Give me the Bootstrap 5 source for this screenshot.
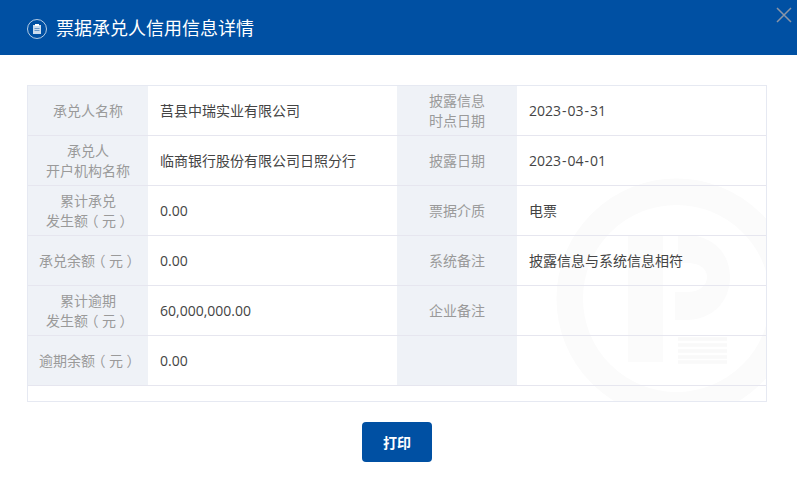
<!doctype html>
<html lang="zh"><head><meta charset="utf-8">
<link href="https://cdn.jsdelivr.net/npm/bootstrap@5.3.0/dist/css/bootstrap.min.css" rel="stylesheet">
<style>
html,body{height:100%}
body{font-family:"Open Sans","Noto Sans CJK SC",sans-serif;font-size:14px;color:#333;background:#fff;overflow:hidden}
.hd-bar{height:55px;background:#0050a3;color:#fff;padding-left:27px}
.hd-ico{margin-top:3px;flex:none}
.hd-title{font-size:18px;font-weight:400;line-height:53px;margin:0 0 0 9px;font-family:"Noto Sans CJK SC",sans-serif}
.hd-close{top:7px;right:5px;width:16px;height:16px}
.sheet-wrap{margin:30px 30px 0 27px;border:1px solid #e6e9f2;height:317px;overflow:hidden}
.wm{top:92px;left:528px;width:240px;height:240px}
.info-tb{table-layout:fixed;width:100%;border-collapse:separate;border-spacing:0;background:transparent}
.info-tb td{height:50px;border-bottom:1px solid #e6e6ef;padding:0 12px;line-height:20px;vertical-align:middle;background:transparent;color:#444}
.info-tb td.lab{width:120px;background:#eff2f7;color:#9a9a9a;text-align:center;padding:0 4px}
.par{font-feature-settings:"halt";margin:0 3.5px}
.hy{margin:0 1px}
.foot-wrap{margin:0 30px 0 27px}
.print-btn{width:70px;height:40px;background:#0050a3;color:#fff;font-weight:700;font-size:14px;border-radius:4px;border:0;margin-top:20px}
.print-btn:hover{background:#0050a3;color:#fff}
</style></head><body>
<div class="hd-bar d-flex align-items-center position-relative">
<svg class="hd-ico" width="20" height="20" viewBox="0 0 20 20" fill="none"><circle cx="10" cy="10" r="9.500" stroke="#fff" stroke-width="1" opacity=".7"/><path d="M6 6h8v9H6z" fill="#fff" opacity=".8"/><path d="M8 5h4v2H8z" fill="#fff"/><path d="M7.500 9.500h5M7.500 11.500h5" stroke="#0050a3" stroke-width=".7" opacity=".7"/></svg>
<h1 class="hd-title">票据承兑人信用信息详情</h1>
<svg class="hd-close position-absolute" viewBox="0 0 16 16" fill="none"><path d="M1 1l14 14M15 1L1 15" stroke="#8b95a6" stroke-width="1.500"/></svg>
</div>
<div class="sheet-wrap position-relative">
<svg class="wm position-absolute" viewBox="0 0 240 240" fill="none"><circle cx="120.500" cy="120.500" r="106.750" stroke="#fbfbfb" stroke-width="26.500"/><path d="M72 57h35v127H72z" fill="#fbfbfb"/><path d="M122 57h8c26 0 44 18 44 42 0 25-18 43-44 43h-11v-28h12c12 0 20-6 20-15 0-8-7-14-20-14h-9z" fill="#fbfbfb"/><path d="M122 161h49M122 167h49M122 173h49M122 179h49M122 184h49" stroke="#f9f9f9" stroke-width="3.500"/></svg>
<table class="info-tb position-relative"><tbody>
<tr><td class="lab">承兑人名称</td><td>莒县中瑞实业有限公司</td><td class="lab">披露信息<br>时点日期</td><td>2023<span class="hy">-</span>03<span class="hy">-</span>31</td></tr>
<tr><td class="lab">承兑人<br>开户机构名称</td><td>临商银行股份有限公司日照分行</td><td class="lab">披露日期</td><td>2023<span class="hy">-</span>04<span class="hy">-</span>01</td></tr>
<tr><td class="lab">累计承兑<br>发生额<span class="par">（</span>元<span class="par">）</span></td><td>0.00</td><td class="lab">票据介质</td><td>电票</td></tr>
<tr><td class="lab">承兑余额<span class="par">（</span>元<span class="par">）</span></td><td>0.00</td><td class="lab">系统备注</td><td>披露信息与系统信息相符</td></tr>
<tr><td class="lab">累计逾期<br>发生额<span class="par">（</span>元<span class="par">）</span></td><td>60,000,000.00</td><td class="lab">企业备注</td><td></td></tr>
<tr><td class="lab">逾期余额<span class="par">（</span>元<span class="par">）</span></td><td>0.00</td><td class="lab"></td><td></td></tr>
</tbody></table>
</div>
<div class="foot-wrap text-center"><button class="btn print-btn" type="button">打印</button></div>
<script src="https://cdn.jsdelivr.net/npm/bootstrap@5.3.0/dist/js/bootstrap.bundle.min.js"></script>
</body></html>
